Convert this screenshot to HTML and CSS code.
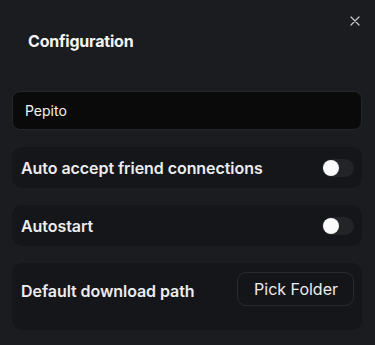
FILE: index.html
```html
<!DOCTYPE html>
<html>
<head>
<meta charset="utf-8">
<link rel="stylesheet" href="styles.css">
</head>
<body>
<div class="dialog">
  <button class="close" aria-label="Close">
    <svg width="10" height="10" viewBox="0 0 10 10"><path d="M1 1L9 9M9 1L1 9" stroke="#c9c9cc" stroke-width="1.2" fill="none" stroke-linecap="round"/></svg>
  </button>
  <h2 class="title">Configuration</h2>
  <div class="content">
    <input class="name" type="text" value="Pepito">
    <div class="card row">
      <span class="label">Auto accept friend connections</span>
      <span class="switch"><span class="knob"></span></span>
    </div>
    <div class="card row">
      <span class="label">Autostart</span>
      <span class="switch"><span class="knob"></span></span>
    </div>
    <div class="card row tall">
      <span class="label">Default download path</span>
      <button class="pick">Pick Folder</button>
    </div>
  </div>
</div>
</body>
</html>
```
FILE: styles.css
```css
* { box-sizing: border-box; }
html, body { margin: 0; padding: 0; }
body {
  background: #1b1c20;
  font-family: Inter, "Liberation Sans", sans-serif;
  color: #f2f2f3;
  width: 375px;
  height: 345px;
  overflow: hidden;
}
.dialog {
  position: relative;
  padding: 29px 13px 0 12px;
}
.close {
  position: absolute;
  top: 14px;
  right: 13px;
  width: 14px;
  height: 14px;
  padding: 0;
  border: 0;
  background: none;
  display: flex;
  align-items: center;
  justify-content: center;
}
.title {
  margin: 0 0 0 16px;
  font-size: 16px;
  font-weight: 700;
  letter-spacing: -0.2px;
  line-height: 24px;
  color: #f4f4f5;
}
.content {
  margin-top: 38px;
  display: flex;
  flex-direction: column;
  gap: 17px;
}
.name {
  width: 100%;
  height: 39px;
  background: #0a0a0b;
  border: 1px solid #26272b;
  border-radius: 8px;
  padding: 0 12px;
  font-family: inherit;
  font-size: 14px;
  color: #f2f2f3;
  outline: none;
}
.card {
  background: #151619;
  border-radius: 10px;
}
.row {
  display: flex;
  align-items: center;
  justify-content: space-between;
  height: 41px;
  padding: 0 8px 0 9px;
}
.row.tall {
  height: 67px;
  align-items: flex-start;
  padding-top: 9px;
}
.label {
  font-size: 16px;
  font-weight: 600;
  letter-spacing: -0.06px;
  color: #ececee;
}
.tall .label { margin-top: 9px; }
.switch {
  width: 32px;
  height: 18px;
  border-radius: 9px;
  background: #232427;
  display: flex;
  align-items: center;
  padding: 1px;
}
.knob {
  width: 16px;
  height: 16px;
  border-radius: 50%;
  background: #fafafa;
}
.pick {
  height: 34px;
  padding: 0 15px 0 16px;
  background: #141518;
  border: 1px solid #2a2b2f;
  border-radius: 9px;
  font-family: inherit;
  font-size: 16px;
  color: #ececee;
}
```
